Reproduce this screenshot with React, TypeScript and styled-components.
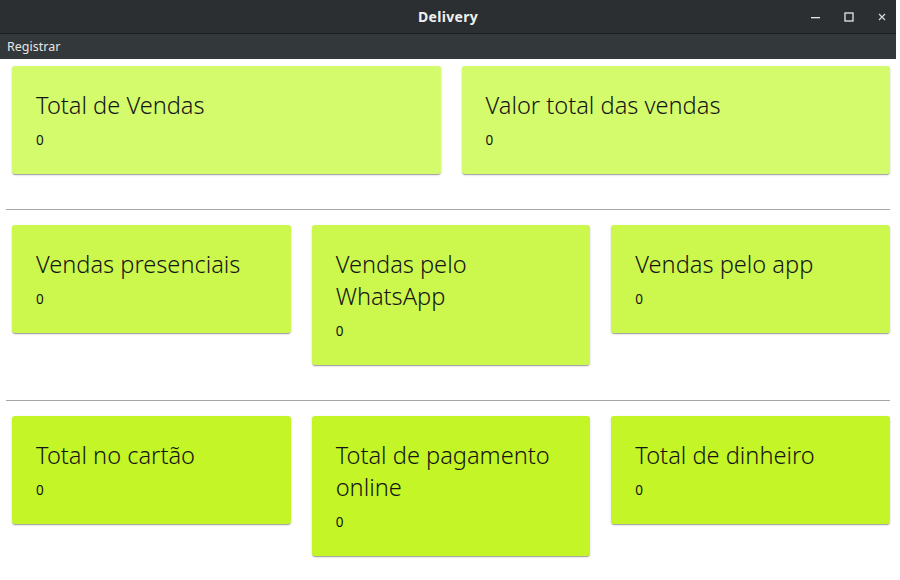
import React from "react";
import styled, { createGlobalStyle } from "styled-components";

const Global = createGlobalStyle`
  html, body { margin: 0; padding: 0; background: #ffffff; }
  body { font-family: "Noto Sans", "DejaVu Sans", sans-serif; }
`;

const Window = styled.div`
  width: 896px;
  height: 580px;
  display: flex;
  flex-direction: column;
  background: #ffffff;
`;

const TitleBar = styled.div`
  height: 33px;
  background: #2c2f32;
  border-bottom: 1px solid #1b1d1f;
  display: grid;
  grid-template-columns: 1fr auto 1fr;
  align-items: center;
`;

const Title = styled.div`
  grid-column: 2;
  color: #f0f0f0;
  font-family: "Noto Sans", sans-serif;
  font-weight: 700;
  font-size: 14px;
  letter-spacing: 0.3px;
`;

const Controls = styled.div`
  grid-column: 3;
  justify-self: end;
  display: flex;
  align-items: center;
  gap: 17px;
  padding-right: 6px;
`;

const CtlBtn = styled.div`
  width: 16px;
  height: 16px;
  display: flex;
  align-items: center;
  justify-content: center;
`;

const MenuBar = styled.div`
  height: 25px;
  background: #33383b;
  display: flex;
  align-items: center;
  padding-left: 7px;
`;

const MenuItem = styled.span`
  color: #e6e6e6;
  font-family: "Noto Sans", sans-serif;
  font-size: 12.5px;
`;

const Content = styled.div`
  display: flex;
  flex-direction: column;
  padding: 7px 6px 0 6px;
`;

const Row = styled.div<{ $cols: number }>`
  display: grid;
  grid-template-columns: repeat(${(p) => p.$cols}, 1fr);
  column-gap: 21px;
  align-items: start;
  padding: 0 0 0 6px;
`;

const Divider = styled.hr`
  border: none;
  height: 1px;
  background: #a6a6a6;
  margin: 35px 0 15px 0;
`;

const Card = styled.div<{ $bg: string }>`
  background: ${(p) => p.$bg};
  border-radius: 3px;
  padding: 23px 24px 24px 24px;
  box-shadow: 0 2px 1px -1px rgba(0, 0, 0, 0.2), 0 1px 1px 0 rgba(0, 0, 0, 0.14),
    0 1px 3px 0 rgba(0, 0, 0, 0.12);
  display: flex;
  flex-direction: column;
  gap: 9px;
`;

const CardTitle = styled.div`
  font-family: "Noto Sans", sans-serif;
  font-size: 23.6px;
  line-height: 32px;
  color: #151515;
  font-weight: 300;
`;

const CardValue = styled.div`
  font-family: "Noto Sans", sans-serif;
  font-size: 13.5px;
  line-height: 20px;
  color: #111;
`;

const InfoCard = ({ title, value, bg }: { title: string; value: string; bg: string }) => (
  <Card $bg={bg}>
    <CardTitle>{title}</CardTitle>
    <CardValue>{value}</CardValue>
  </Card>
);

export default function App() {
  const c1 = "#d4fb6b";
  const c2 = "#ccf84d";
  const c3 = "#c3f527";
  return (
    <Window>
      <Global />
      <TitleBar>
        <Title>Delivery</Title>
        <Controls>
          <CtlBtn>
            <svg width="10" height="10" viewBox="0 0 10 10">
              <rect x="0" y="5" width="9" height="1.3" fill="#e8e8e8" />
            </svg>
          </CtlBtn>
          <CtlBtn>
            <svg width="10" height="10" viewBox="0 0 10 10">
              <rect x="1" y="1" width="8" height="8" fill="none" stroke="#e8e8e8" strokeWidth="1.3" />
            </svg>
          </CtlBtn>
          <CtlBtn>
            <svg width="10" height="10" viewBox="0 0 10 10">
              <path d="M2 2 L8 8 M8 2 L2 8" stroke="#d8d8d8" strokeWidth="1.2" />
            </svg>
          </CtlBtn>
        </Controls>
      </TitleBar>
      <MenuBar>
        <MenuItem>Registrar</MenuItem>
      </MenuBar>
      <Content>
        <Row $cols={2}>
          <InfoCard title="Total de Vendas" value="0" bg={c1} />
          <InfoCard title="Valor total das vendas" value="0" bg={c1} />
        </Row>
        <Divider />
        <Row $cols={3}>
          <InfoCard title="Vendas presenciais" value="0" bg={c2} />
          <InfoCard title="Vendas pelo WhatsApp" value="0" bg={c2} />
          <InfoCard title="Vendas pelo app" value="0" bg={c2} />
        </Row>
        <Divider />
        <Row $cols={3}>
          <InfoCard title="Total no cartão" value="0" bg={c3} />
          <InfoCard title="Total de pagamento online" value="0" bg={c3} />
          <InfoCard title="Total de dinheiro" value="0" bg={c3} />
        </Row>
      </Content>
    </Window>
  );
}
